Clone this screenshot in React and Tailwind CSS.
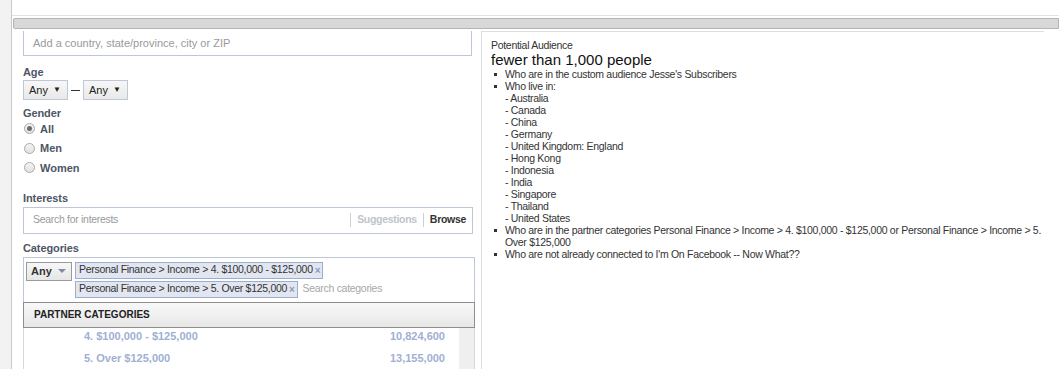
import { useState } from 'react';

const countries = [
  'Australia',
  'Canada',
  'China',
  'Germany',
  'United Kingdom: England',
  'Hong Kong',
  'Indonesia',
  'India',
  'Singapore',
  'Thailand',
  'United States',
];

const partnerRows = [
  { name: '4. $100,000 - $125,000', count: '10,824,600' },
  { name: '5. Over $125,000', count: '13,155,000' },
];

function Radio({ label, checked }) {
  return (
    <div className="flex h-[19.5px] items-center">
      <span className="ml-[1px] flex h-[11px] w-[11px] items-center justify-center rounded-full border border-[#a9a9a9] bg-gradient-to-b from-[#f4f4f4] to-[#e2e2e2]">
        {checked && <span className="h-[5px] w-[5px] rounded-full bg-[#6b6b6b]" />}
      </span>
      <span className="ml-[5px] text-[11px] font-bold text-[#4e5665]">{label}</span>
    </div>
  );
}

function AgeSelect() {
  return (
    <div className="flex h-[20px] w-[45px] items-center justify-between border border-[#bdc7d8] bg-gradient-to-b from-[#f7f7f7] to-[#e9e9e9] pl-[5px] pr-[6px] text-[11px] text-[#222]">
      <span>Any</span>
      <span className="text-[8px]">▼</span>
    </div>
  );
}

function Token({ text }) {
  return (
    <span className="flex h-[17px] items-center border border-[#9dadd0] bg-[#e2e6f0] pl-[3px] pr-[2px] text-[10.5px] tracking-[-0.3px] text-[#333]">
      {text}
      <span className="ml-[2px] text-[10px] font-bold text-[#8d9ab8]">×</span>
    </span>
  );
}

function Label({ children, className = '' }) {
  return (
    <div className={`text-[11px] font-bold leading-[14px] tracking-[-0.1px] text-[#4e5665] ${className}`}>
      {children}
    </div>
  );
}

export default function App() {
  const [gender, setGender] = useState('All');

  return (
    <div className="flex h-[369px] w-[1059px] overflow-hidden bg-white font-['Liberation_Sans',Arial,sans-serif] text-[11px]">
      {/* left rail */}
      <div className="w-[12px] shrink-0 border-r border-[#c9c9c9] bg-[#f2f2f2]" />

      <div className="flex min-w-0 flex-1 flex-col">
        <div className="h-[15px] shrink-0" />
        {/* scroll bar strip */}
        <div className="h-[16px] shrink-0 border-t border-[#e2e2e2] pl-[1px] pt-[2px]">
          <div className="h-[11px] rounded-l-[2px] border border-[#b4b4b4] bg-[#d8d8d8]" />
        </div>

        <div className="flex flex-1">
          {/* Left panel */}
          <div className="w-[470px] shrink-0 border-r border-[#d8dbe0] pl-[11px] pr-[5px]">
            <div className="flex h-[25px] w-[449px] items-center border border-t-0 border-[#bdc7d8] px-[9px] text-[11px] text-[#9a9a9a]">
              Add a country, state/province, city or ZIP
            </div>

            <Label className="mt-[9px]">Age</Label>
            <div className="mt-[1px] flex items-center">
              <AgeSelect />
              <span className="mx-[3px] h-[1px] w-[9px] bg-[#333]" />
              <AgeSelect />
            </div>

            <Label className="mt-[6px]">Gender</Label>
            <div className="-mt-[1px]" onClick={() => setGender(gender)}>
              {['All', 'Men', 'Women'].map((g) => (
                <Radio key={g} label={g} checked={gender === g} />
              ))}
            </div>

            <Label className="mt-[13px]">Interests</Label>
            <div className="mt-[2px] flex h-[27px] w-[450px] items-center border border-[#bdc7d8] pl-[9px] pr-[6px]">
              <span className="flex-1 text-[10.5px] tracking-[-0.3px] text-[#9a9a9a]">Search for interests</span>
              <span className="h-[14px] w-px bg-[#c9d0dd]" />
              <span className="px-[6px] text-[10.5px] font-bold tracking-[-0.3px] text-[#c0c4cc]">Suggestions</span>
              <span className="h-[14px] w-px bg-[#c9d0dd]" />
              <span className="pl-[6px] text-[10.5px] font-bold tracking-[-0.3px] text-[#333]">Browse</span>
            </div>

            <Label className="mt-[7px]">Categories</Label>
            <div className="mt-[2px] flex w-[452px] gap-[3px] border border-b-0 border-[#bdc7d8] px-[2px] pt-[4px] pb-[4px]">
              <div className="flex h-[19px] w-[46px] shrink-0 items-center justify-between border border-[#9a9a9a] bg-gradient-to-b from-[#f7f7f7] to-[#e6e6e6] pl-[4px] pr-[5px] text-[11px] font-bold text-[#333]">
                Any
                <span className="border-x-[4px] border-t-[4px] border-x-transparent border-t-[#7d8ba6]" />
              </div>
              <div className="flex flex-col gap-[2px]">
                <div className="flex">
                  <Token text="Personal Finance > Income > 4. $100,000 - $125,000" />
                </div>
                <div className="flex items-center gap-[5px]">
                  <Token text="Personal Finance > Income > 5. Over $125,000" />
                  <span className="text-[10.5px] tracking-[-0.3px] text-[#a7a7a7]">Search categories</span>
                </div>
              </div>
            </div>

            <div className="flex h-[26px] w-[452px] items-center border border-[#8e8e8e] bg-gradient-to-b from-[#f8f8f8] to-[#e7e7e7] pl-[10px] text-[10px] font-bold text-[#222]">
              PARTNER CATEGORIES
            </div>
            <div className="flex w-[452px] border-x border-[#d3d8e2]">
              <div className="-mt-[2px] flex-1">
                {partnerRows.map((r) => (
                  <div key={r.name} className="flex h-[22px] items-center justify-between pl-[60px] pr-[14px] text-[11px] font-bold text-[#9fb0d3]">
                    <span>{r.name}</span>
                    <span>{r.count}</span>
                  </div>
                ))}
              </div>
              <div className="h-[44px] w-[15px] bg-[#efefef]" />
            </div>
          </div>

          {/* Right panel */}
          <div className="flex-1">
            <div className="w-[562px] border-t border-[#dedede] pl-[9px] pt-[7px] text-[#333]">
              <div className="text-[10.5px] leading-[13px] tracking-[-0.3px]">Potential Audience</div>
              <div className="text-[15px] leading-[16px] text-[#111]">fewer than 1,000 people</div>
              <ul className="text-[10.5px] leading-[12px] tracking-[-0.3px]">
                <li className="flex">
                  <span className="ml-[3px] mr-[8px] mt-[5px] h-[3px] w-[3px] shrink-0 bg-[#333]" />
                  <span>Who are in the custom audience Jesse's Subscribers</span>
                </li>
                <li className="flex">
                  <span className="ml-[3px] mr-[8px] mt-[5px] h-[3px] w-[3px] shrink-0 bg-[#333]" />
                  <div>
                    <div>Who live in:</div>
                    {countries.map((c) => (
                      <div key={c}>- {c}</div>
                    ))}
                  </div>
                </li>
                <li className="flex">
                  <span className="ml-[3px] mr-[8px] mt-[5px] h-[3px] w-[3px] shrink-0 bg-[#333]" />
                  <span>
                    Who are in the partner categories Personal Finance &gt; Income &gt; 4. $100,000 - $125,000 or Personal Finance &gt; Income &gt; 5. Over $125,000
                  </span>
                </li>
                <li className="flex">
                  <span className="ml-[3px] mr-[8px] mt-[5px] h-[3px] w-[3px] shrink-0 bg-[#333]" />
                  <span>Who are not already connected to I'm On Facebook -- Now What??</span>
                </li>
              </ul>
            </div>
          </div>
        </div>
      </div>
    </div>
  );
}
